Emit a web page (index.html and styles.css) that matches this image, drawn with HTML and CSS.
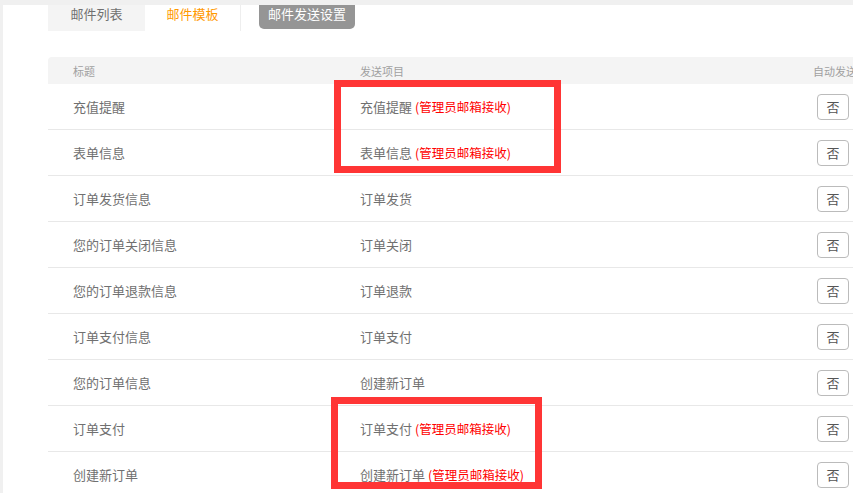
FILE: index.html
```html
<!DOCTYPE html>
<html>
<head>
  <title>邮件模板</title>
  <link rel="stylesheet" href="styles.css">
</head>
<body>
  <div class="page">
    <div class="tabs">
      <div class="tab">邮件列表</div>
      <div class="tab active">邮件模板</div>
      <div class="tab-btn">邮件发送设置</div>
    </div>

    <div class="list">
      <div class="list-head">
        <div class="cell">标题</div>
        <div class="cell">发送项目</div>
        <div class="cell">自动发送</div>
      </div>
      <div class="list-row">
        <div class="cell">充值提醒</div>
        <div class="cell">充值提醒 <span class="note">(管理员邮箱接收)</span></div>
        <div class="cell"><button class="switch">否</button></div>
      </div>
      <div class="list-row">
        <div class="cell">表单信息</div>
        <div class="cell">表单信息 <span class="note">(管理员邮箱接收)</span></div>
        <div class="cell"><button class="switch">否</button></div>
      </div>
      <div class="list-row">
        <div class="cell">订单发货信息</div>
        <div class="cell">订单发货</div>
        <div class="cell"><button class="switch">否</button></div>
      </div>
      <div class="list-row">
        <div class="cell">您的订单关闭信息</div>
        <div class="cell">订单关闭</div>
        <div class="cell"><button class="switch">否</button></div>
      </div>
      <div class="list-row">
        <div class="cell">您的订单退款信息</div>
        <div class="cell">订单退款</div>
        <div class="cell"><button class="switch">否</button></div>
      </div>
      <div class="list-row">
        <div class="cell">订单支付信息</div>
        <div class="cell">订单支付</div>
        <div class="cell"><button class="switch">否</button></div>
      </div>
      <div class="list-row">
        <div class="cell">您的订单信息</div>
        <div class="cell">创建新订单</div>
        <div class="cell"><button class="switch">否</button></div>
      </div>
      <div class="list-row">
        <div class="cell">订单支付</div>
        <div class="cell">订单支付 <span class="note">(管理员邮箱接收)</span></div>
        <div class="cell"><button class="switch">否</button></div>
      </div>
      <div class="list-row">
        <div class="cell">创建新订单</div>
        <div class="cell">创建新订单 <span class="note">(管理员邮箱接收)</span></div>
        <div class="cell"><button class="switch">否</button></div>
      </div>
    </div>
  </div>

  <!-- annotation boxes drawn over the screenshot -->
  <div class="mark mark-top"></div>
  <div class="mark mark-bottom"></div>
</body>
</html>
```

FILE: styles.css
```css
/* page frame */
body {
  margin: 0;
  background: #f0f0f0;
  font-family: "Noto Sans CJK SC", "Microsoft YaHei", sans-serif;
  overflow: hidden;
}

.page {
  margin: 5px 0 0 3px;
  padding-left: 45px;
  height: 488px;
  background: #fff;
}

/* tabs */
.tabs {
  display: flex;
  align-items: flex-start;
  height: 26px;
}

.tab {
  width: 97px;
  height: 26px;
  padding-top: 1px;
  box-sizing: border-box;
  line-height: 16px;
  text-align: center;
  font-size: 13px;
  color: #707070;
  background: #f4f4f4;
}

.tab.active {
  width: 96px;
  background: #fff;
  color: #f90;
  border-right: 1px solid #eee;
}

.tab-btn {
  margin-left: 18px;
  width: 96px;
  height: 24px;
  padding-top: 1px;
  box-sizing: border-box;
  line-height: 16px;
  text-align: center;
  font-size: 13px;
  color: #fff;
  background: #959595;
  border-radius: 0 0 5px 5px;
}

/* list */
.list {
  margin-top: 26px;
  width: 840px;
}

.list-head,
.list-row {
  display: grid;
  grid-template-columns: 287px 455px 1fr;
  align-items: center;
}

.list-head {
  height: 27px;
  background: #f4f4f4;
  border-radius: 4px 0 0 0;
  font-size: 11px;
  color: #a0a0a0;
}

.list-row {
  height: 45px;
  border-bottom: 1px solid #e8e8e8;
  font-size: 13px;
  color: #707070;
}

.cell {
  padding-left: 25px;
  white-space: nowrap;
}

.list-head .cell:last-child,
.list-row .cell:last-child {
  padding-left: 23px;
}

.note {
  color: #f00;
  font-size: 12.5px;
}

.switch {
  display: block;
  margin-left: 4px;
  width: 32px;
  height: 26px;
  padding: 0;
  font-family: inherit;
  font-size: 13px;
  color: #555;
  background: #fff;
  border: 1px solid #bbb;
  border-radius: 4px;
}

/* red annotation frames */
.mark {
  position: absolute;
  border: 7px solid #ff3535;
  box-sizing: border-box;
}

.mark-top {
  left: 334px;
  top: 80px;
  width: 227px;
  height: 93px;
}

.mark-bottom {
  left: 331px;
  top: 397px;
  width: 211px;
  height: 92px;
}
```
